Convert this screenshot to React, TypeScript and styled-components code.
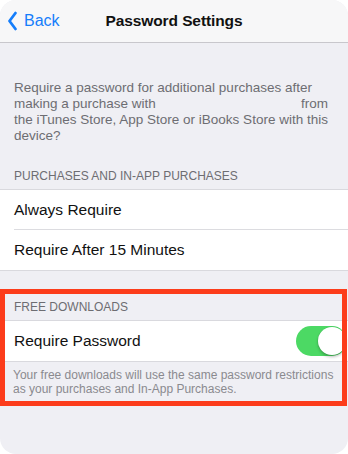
import React from "react";
import styled, { createGlobalStyle } from "styled-components";

const Global = createGlobalStyle`
  html, body { margin: 0; padding: 0; background: #ffffff; }
  body { font-family: "Liberation Sans", Arial, Helvetica, sans-serif; -webkit-font-smoothing: antialiased; }
`;

const Screen = styled.div`
  position: relative;
  width: 348px;
  height: 454px;
  background: #efeff4;
  border-radius: 16px;
  overflow: hidden;
  display: flex;
  flex-direction: column;
`;

const NavBar = styled.div`
  position: relative;
  height: 42px;
  flex: none;
  background: #f7f7f8;
  border-bottom: 1px solid #c8c7cc;
  display: flex;
  align-items: center;
  justify-content: center;
`;

const BackButton = styled.div`
  position: absolute;
  left: 7px;
  top: 0;
  height: 42px;
  display: flex;
  align-items: center;
  gap: 6px;
  color: #157efb;
  font-size: 16px;
`;

const Title = styled.div`
  font-size: 15.5px;
  font-weight: 700;
  color: #111111;
  letter-spacing: -0.1px;
`;

const Description = styled.div`
  padding: 37px 20px 0 14px;
  font-size: 13.5px;
  line-height: 16px;
  color: #6d6d72;
`;

const Line = styled.div<{ $spread?: boolean }>`
  display: ${(p) => (p.$spread ? "flex" : "block")};
  justify-content: space-between;
  white-space: nowrap;
`;

const SectionHeader = styled.div<{ $top: number }>`
  padding: ${(p) => p.$top}px 14px 5px;
  font-size: 12px;
  line-height: 16px;
  color: #6d6d72;
  text-transform: uppercase;
`;

const Group = styled.div`
  background: #ffffff;
  border-top: 1px solid #d9d9de;
  border-bottom: 1px solid #d9d9de;
`;

const Row = styled.div<{ $divider?: boolean }>`
  position: relative;
  height: 40px;
  display: flex;
  align-items: center;
  justify-content: space-between;
  padding: 0 0 0 14px;
  font-size: 15.5px;
  color: #111111;
  ${(p) =>
    p.$divider
      ? `&::after { content: ""; position: absolute; left: 14px; right: 0; bottom: 0; height: 1px; background: #dcdce0; }`
      : ""}
`;

const Footer = styled.div`
  padding: 6px 14px 0 13px;
  font-size: 12px;
  line-height: 14px;
  color: #8a8a8f;
`;

const Switch = styled.div<{ $on: boolean }>`
  position: relative;
  width: 51px;
  height: 30px;
  border-radius: 15px;
  margin-right: 1px;
  background: ${(p) => (p.$on ? "#4cd964" : "#e5e5ea")};
  flex: none;
`;

const Knob = styled.div<{ $on: boolean }>`
  position: absolute;
  top: 1px;
  left: ${(p) => (p.$on ? "22px" : "1px")};
  width: 28px;
  height: 28px;
  border-radius: 50%;
  background: #ffffff;
  box-shadow: 0 2px 3px rgba(0, 0, 0, 0.25), 0 0 0 0.5px rgba(0, 0, 0, 0.08);
`;

const Highlight = styled.div`
  position: absolute;
  left: 0;
  top: 289px;
  width: 347px;
  height: 117px;
  box-sizing: border-box;
  border: 5px solid #fc3c1b;
  pointer-events: none;
`;

const Chevron = () => (
  <svg width="11" height="20" viewBox="0 0 11 20" fill="none">
    <path d="M8.5 2 L2.5 10 L8.5 18" stroke="#157efb" strokeWidth="2.8" strokeLinecap="round" strokeLinejoin="round" />
  </svg>
);

export default function App() {
  return (
    <>
      <Global />
      <Screen>
        <NavBar>
          <BackButton>
            <Chevron />
            <span>Back</span>
          </BackButton>
          <Title>Password Settings</Title>
        </NavBar>

        <Description>
          <Line>Require a password for additional purchases after</Line>
          <Line $spread>
            <span>making a purchase with</span>
            <span>from</span>
          </Line>
          <Line>the iTunes Store, App Store or iBooks Store with this</Line>
          <Line>device?</Line>
        </Description>

        <SectionHeader $top={24}>Purchases and In-App Purchases</SectionHeader>
        <Group>
          <Row $divider>Always Require</Row>
          <Row>Require After 15 Minutes</Row>
        </Group>

        <SectionHeader $top={28}>Free Downloads</SectionHeader>
        <Group>
          <Row>
            <span>Require Password</span>
            <Switch $on>
              <Knob $on />
            </Switch>
          </Row>
        </Group>
        <Footer>
          Your free downloads will use the same password restrictions
          <br />
          as your purchases and In-App Purchases.
        </Footer>

        <Highlight />
      </Screen>
    </>
  );
}
